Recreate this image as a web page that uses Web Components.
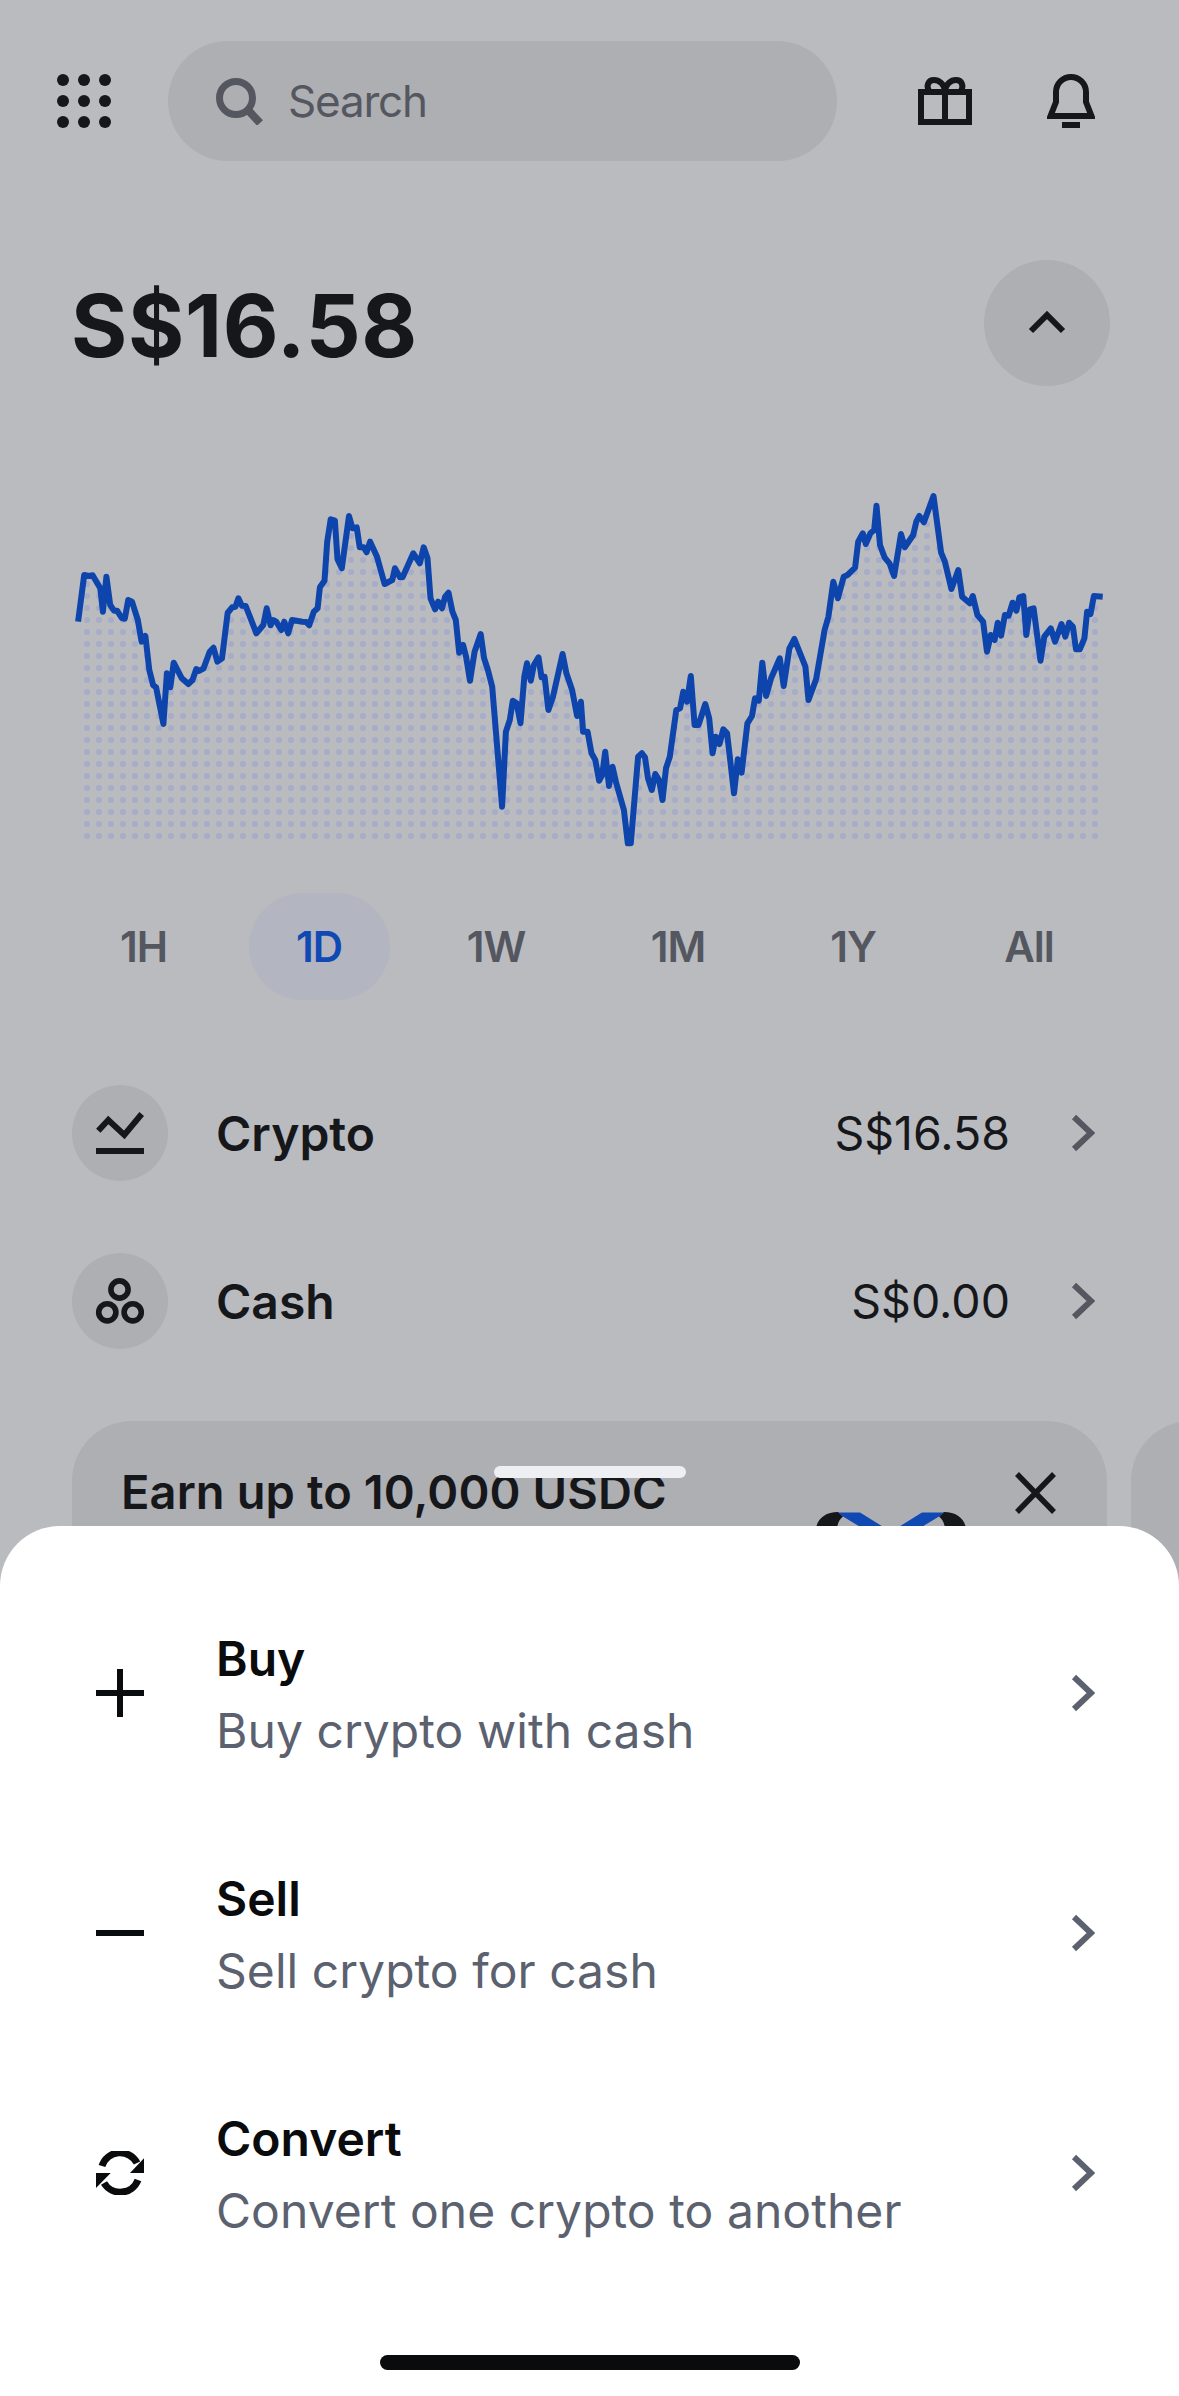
<!DOCTYPE html>
<html lang="en">
<head>
<meta charset="utf-8">
<title>Wallet</title>
<style>
    html,body{margin:0;padding:0;background:#babbbf;}
    body{font-family:Inter,"Liberation Sans",sans-serif;color:#16171a;}
</style>
</head>
<body>
<app-screen>
    <top-bar></top-bar>
    <balance-head amount="S$16.58"></balance-head>
    <price-chart></price-chart>
    <range-tabs active="1D"></range-tabs>
    <asset-row value="S$16.58">
        <svg slot="icon" width="96" height="96" viewBox="0 0 96 96" fill="none" stroke="#16171a" stroke-width="6"><path d="M26.3 45.7 36.3 35 52.3 50 69.7 29"/><path d="M24 66H72"/></svg>
        Crypto
    </asset-row>
    <asset-row value="S$0.00">
        <svg slot="icon" width="96" height="96" viewBox="0 0 96 96" fill="none" stroke="#16171a" stroke-width="5.6"><circle cx="47.5" cy="36.5" r="8.6"/><circle cx="35.3" cy="59.3" r="8.6"/><circle cx="60.7" cy="59.3" r="8.6"/></svg>
        Cash
    </asset-row>
    <promo-strip>Earn up to 10,000 USDC</promo-strip>
    <action-sheet>
        <action-row title="Buy" detail="Buy crypto with cash">
            <svg slot="icon" width="48" height="48" viewBox="0 0 48 48" fill="none" stroke="#0a0b0d" stroke-width="6"><path d="M0 24H48M24 0V48"/></svg>
        </action-row>
        <action-row title="Sell" detail="Sell crypto for cash">
            <svg slot="icon" width="48" height="48" viewBox="0 0 48 48" fill="none" stroke="#0a0b0d" stroke-width="6"><path d="M0 24H48"/></svg>
        </action-row>
        <action-row title="Convert" detail="Convert one crypto to another">
            <svg slot="icon" width="48" height="44" viewBox="0 0 48 44"><path d="M6 15A19 19 0 0 1 41 12M42 29A19 19 0 0 1 8 32" fill="none" stroke="#0a0b0d" stroke-width="7"/><path d="M48 7.3V22H34ZM0 37V22H14.7Z" fill="#0a0b0d"/></svg>
        </action-row>
    </action-sheet>
</app-screen>

<script>
const chevron=`<svg width="24" height="38" viewBox="0 0 24 38" fill="none" stroke="currentColor" stroke-width="6"><path d="M3 3 20 19 3 35"/></svg>`

class AppScreen extends HTMLElement{
    constructor(){
        super()
        this.attachShadow({mode:'open'})
    }
    connectedCallback(){
        this.shadowRoot.innerHTML=`
        <style>
            :host{display:block;position:relative;width:1179px;height:2396px;overflow:hidden;}
        </style>
        <slot></slot>
        `
    }
}

class TopBar extends HTMLElement{
    constructor(){
        super()
        this.attachShadow({mode:'open'})
    }
    connectedCallback(){
        this.shadowRoot.innerHTML=`
        <style>
            :host{display:flex;align-items:center;padding:41px 0 0 57px;}
            .apps{display:grid;grid-template-columns:repeat(3,12px);gap:9px;margin-right:57px;}
            .apps i{width:12px;height:12px;border-radius:50%;background:#16171a;}
            .search{width:669px;height:120px;box-sizing:border-box;border-radius:60px;background:#aeafb3;
                display:flex;align-items:center;padding-left:48px;gap:25px;margin-right:81px;}
            .search span{font-size:44px;letter-spacing:-1.2px;color:#54575f;}
            svg{display:block;}
            .gift{margin-right:75px;}
        </style>
        <div class="apps"><i></i><i></i><i></i><i></i><i></i><i></i><i></i><i></i><i></i></div>
        <div class="search">
            <svg width="47" height="47" viewBox="0 0 47 47" fill="none" stroke="#54575f"><circle cx="20" cy="20" r="16.5" stroke-width="7"/><path d="M31 31 44 45" stroke-width="8"/></svg>
            <span>Search</span>
        </div>
        <svg class="gift" width="54" height="54" viewBox="0 0 54 54" fill="none" stroke="#16171a" stroke-width="6"><path d="M3 18H51V48H3ZM27 18V48M27 16C26 10 21 6 16 6 10 6 8 12 11 17M27 16C28 10 33 6 38 6 44 6 46 12 43 17"/></svg>
        <svg width="48" height="54" viewBox="0 0 48 54" fill="none" stroke="#16171a" stroke-width="6"><path d="M3.5 42 9 28V18A15 15 0 0 1 39 18V28L44.5 42Z"/><path d="M15 51H33"/></svg>
        `
    }
}

class BalanceHead extends HTMLElement{
    constructor(){
        super()
        this.attachShadow({mode:'open'})
    }
    connectedCallback(){
        this.shadowRoot.innerHTML=`
        <style>
            :host{display:flex;align-items:center;justify-content:space-between;padding:99px 69px 0 71px;}
            .amount{font-size:86px;font-weight:700;line-height:126px;letter-spacing:.7px;padding-top:3px;height:123px;}
            .toggle{width:126px;height:126px;border-radius:50%;background:#aeafb3;display:flex;align-items:center;justify-content:center;}
            svg{display:block;}
        </style>
        <div class="amount">${this.getAttribute('amount')}</div>
        <div class="toggle"><svg width="38" height="24" viewBox="0 0 38 24" fill="none" stroke="#16171a" stroke-width="6"><path d="M3 20 19 4 35 20"/></svg></div>
        `
    }
}

// traced from the two halves of the chart, x and y in crop units
const leftTrace=[204,455,220,315,232,318,242,316,262,355,269,425,278,320,288,405,298,422,306,422,318,444,326,446,335,390,345,395,360,450,370,515,380,498,390,600,400,645,408,652,427,762,436,610,445,652,454,578,475,625,492,642,503,630,513,597,520,603,532,595,548,545,558,533,568,575,580,565,595,428,607,412,615,410,623,385,632,407,642,408,670,490,688,465,697,415,707,466,713,450,722,455,735,480,743,455,753,490,763,450,775,452,790,455,800,456,808,466,820,425,830,415,836,352,848,332,855,215,864,148,875,152,882,268,893,295,912,138,921,175,932,172,940,232,950,232,958,247,967,215,985,260,1005,342,1025,330,1032,295,1045,322,1052,322,1080,250,1097,280,1107,232,1117,265,1125,385,1137,418,1145,395,1155,415,1163,380,1172,368,1182,425,1191,450,1200,548,1210,525,1218,560,1228,632,1240,545,1256,492,1265,565,1275,600,1286,650,1312,1010,1322,785,1332,750,1340,692,1350,700,1360,760,1370,620,1377,580,1387,632,1395,585,1407,562,1415,622,1423,620,1433,720,1445,680,1470,552,1480,610,1495,660,1508,738,1518,695]
const rightTrace=[8,785,20,785,30,850,40,870,50,932,58,915,66,845,76,948,85,890,95,940,115,1020,125,1120,133,1120,152,860,162,850,170,862,178,925,188,960,197,912,207,930,216,990,225,895,235,860,252,720,262,715,270,665,280,695,290,618,300,765,310,765,328,702,338,745,347,850,355,800,365,822,375,778,385,790,403,970,413,868,423,908,438,760,450,738,458,685,468,692,477,578,487,678,500,625,523,565,533,648,548,535,561,507,590,590,598,690,618,628,640,480,650,440,663,335,675,385,690,320,700,315,720,293,728,215,740,190,748,222,760,190,770,180,776,107,785,225,797,262,810,280,822,318,840,192,850,232,872,195,880,155,888,138,900,157,925,78,945,248,955,275,972,357,990,300,1000,380,1020,400,1028,378,1040,435,1055,455,1065,545,1075,495,1085,510,1093,458,1102,497,1112,435,1122,437,1132,398,1142,422,1150,382,1160,378,1168,495,1177,418,1187,415,1205,572,1215,500,1232,475,1243,515,1260,462,1270,500,1280,458,1290,470,1298,538,1308,538,1320,505,1327,425,1336,432,1345,378,1368,380]

function tracePoints(list,originX,scaleX){
    const out=[]
    for(let i=0;i<list.length;i+=2){
        out.push((originX+list[i]/scaleX).toFixed(1)+','+(470+list[i+1]/3).toFixed(1))
    }
    return out
}

class PriceChart extends HTMLElement{
    constructor(){
        super()
        this.attachShadow({mode:'open'})
    }
    connectedCallback(){
        const pts=tracePoints(leftTrace,0,2.613).concat(tracePoints(rightTrace,580,2.617)).join(' ')
        this.shadowRoot.innerHTML=`
        <style>
            :host{display:block;height:400px;margin-top:84px;}
            svg{display:block;}
        </style>
        <svg width="1179" height="400" viewBox="0 470 1179 400">
            <defs>
                <pattern id="dots" patternUnits="userSpaceOnUse" x="81" y="758" width="12" height="12">
                    <circle cx="6" cy="6" r="3.1" fill="#a7adc9"/>
                </pattern>
                <clipPath id="under"><polygon points="${pts} 1103,842 78,842"/></clipPath>
            </defs>
            <rect x="81" y="470" width="1020" height="372" fill="url(#dots)" clip-path="url(#under)"/>
            <polyline points="${pts}" fill="none" stroke="#0e45ad" stroke-width="6" stroke-linejoin="round"/>
        </svg>
        `
    }
}

class RangeTabs extends HTMLElement{
    constructor(){
        super()
        this.attachShadow({mode:'open'})
    }
    connectedCallback(){
        const active=this.getAttribute('active')
        const tabs=['1H','1D','1W','1M','1Y','All'].map(t=>`<div class="tab${t==active?' on':''}"><span>${t}</span></div>`).join('')
        this.shadowRoot.innerHTML=`
        <style>
            :host{display:grid;grid-template-columns:177px 174px 180px 184px 166px 186px;padding:23px 0 0 55px;}
            .tab{display:flex;justify-content:center;}
            span{flex:none;width:141px;height:107px;border-radius:54px;display:flex;align-items:center;justify-content:center;
                font-size:42px;font-weight:600;letter-spacing:-1px;color:#54575f;}
            .on span{background:#b3b6c1;color:#1048b4;}
        </style>
        ${tabs}
        `
    }
}

class AssetRow extends HTMLElement{
    constructor(){
        super()
        this.attachShadow({mode:'open'})
    }
    connectedCallback(){
        this.shadowRoot.innerHTML=`
        <style>
            :host{display:flex;align-items:center;height:168px;padding:0 84px 0 72px;font-size:46.5px;}
            :host(:first-of-type){margin-top:49px;}
            .icon{width:96px;height:96px;border-radius:50%;background:#aeafb3;margin-right:48px;}
            .name{font-size:48px;font-weight:600;flex:1;}
            .value{margin-right:61px;}
            .go{color:#54575f;display:flex;}
        </style>
        <div class="icon"><slot name="icon"></slot></div>
        <div class="name"><slot></slot></div>
        <div class="value">${this.getAttribute('value')}</div>
        <div class="go">${chevron}</div>
        `
    }
}

class PromoStrip extends HTMLElement{
    constructor(){
        super()
        this.attachShadow({mode:'open'})
    }
    connectedCallback(){
        this.shadowRoot.innerHTML=`
        <style>
            :host{display:flex;gap:24px;padding:36px 0 0 72px;}
            .card{flex:none;width:1035px;height:300px;box-sizing:border-box;border-radius:60px;background:#aeafb3;
                padding:51px 51px 0 49px;display:flex;flex-direction:column;}
            .head{display:flex;justify-content:space-between;align-items:flex-start;height:40px;}
            .title{font-size:47px;font-weight:600;line-height:40px;letter-spacing:.1px;}
            .logo{align-self:flex-end;margin-right:90px;display:block;}
            .next{flex:none;width:300px;height:300px;border-radius:60px;background:#aeafb3;}
            svg{display:block;}
        </style>
        <div class="card">
            <div class="head">
                <div class="title"><slot></slot></div>
                <svg width="41" height="42" viewBox="0 0 41 42" fill="none" stroke="#16171a" stroke-width="5.5"><path d="M2 2 39 40M39 2 2 40"/></svg>
            </div>
            <svg class="logo" width="150" height="30" viewBox="0 0 150 30">
                <path d="M0 16C2 6 10 0 22 0L27 4.6C24 7 22 10 21 16Z" fill="#16171a"/>
                <path d="M150 16C148 6 140 0 128 0L123 4.6C126 7 128 10 129 16Z" fill="#16171a"/>
                <path d="M22 .5H44L69 16H46L27 4.6ZM128 .5H106L81 16H104L123 4.6Z" fill="#1048b4"/>
            </svg>
        </div>
        <div class="next"></div>
        `
    }
}

class ActionSheet extends HTMLElement{
    constructor(){
        super()
        this.attachShadow({mode:'open'})
    }
    connectedCallback(){
        this.shadowRoot.innerHTML=`
        <style>
            :host{position:absolute;left:0;right:0;top:1526px;bottom:0;background:#fff;border-radius:60px 60px 0 0;
                display:block;box-sizing:border-box;padding-top:47px;}
            .grip{position:absolute;left:494px;top:-60px;width:192px;height:12px;border-radius:6px;background:#eeeff2;}
            .home{width:420px;height:15px;border-radius:8px;background:#0a0b0d;margin:62px auto 0;}
        </style>
        <div class="grip"></div>
        <slot></slot>
        <div class="home"></div>
        `
    }
}

class ActionRow extends HTMLElement{
    constructor(){
        super()
        this.attachShadow({mode:'open'})
    }
    connectedCallback(){
        this.shadowRoot.innerHTML=`
        <style>
            :host{display:flex;align-items:center;height:240px;padding:0 84px 0 96px;}
            .icon{width:48px;display:flex;justify-content:center;margin-right:72px;}
            .text{flex:1;line-height:72px;padding-top:3px;}
            .title{font-size:48px;font-weight:600;color:#0a0b0d;}
            .detail{font-size:48px;letter-spacing:.05px;color:#5b616e;}
            .go{color:#5b616e;display:flex;}
        </style>
        <div class="icon"><slot name="icon"></slot></div>
        <div class="text">
            <div class="title">${this.getAttribute('title')}</div>
            <div class="detail">${this.getAttribute('detail')}</div>
        </div>
        <div class="go">${chevron}</div>
        `
    }
}

window.customElements.define('app-screen',AppScreen)
window.customElements.define('top-bar',TopBar)
window.customElements.define('balance-head',BalanceHead)
window.customElements.define('price-chart',PriceChart)
window.customElements.define('range-tabs',RangeTabs)
window.customElements.define('asset-row',AssetRow)
window.customElements.define('promo-strip',PromoStrip)
window.customElements.define('action-sheet',ActionSheet)
window.customElements.define('action-row',ActionRow)
</script>
</body>
</html>
